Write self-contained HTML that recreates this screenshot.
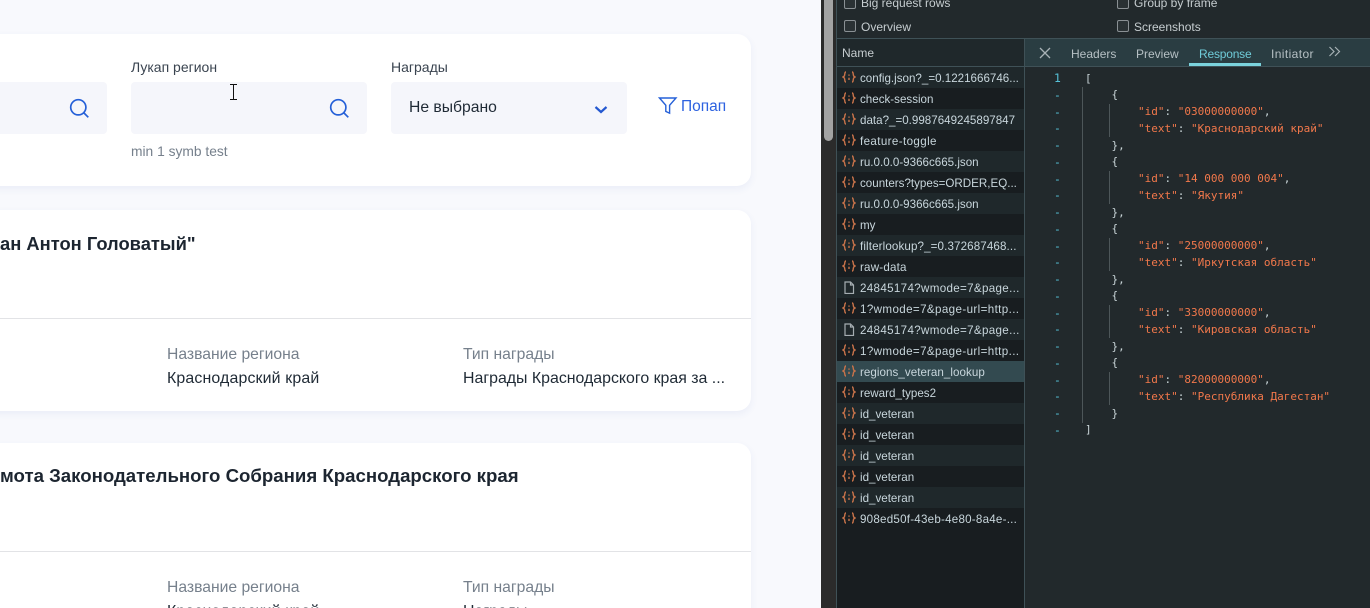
<!DOCTYPE html>
<html lang="ru"><head><meta charset="utf-8"><title>Screenshot</title>
<style>
html,body{margin:0;padding:0;width:1370px;height:608px;overflow:hidden}
body{position:relative;background:#f8f9fd;font-family:"Liberation Sans",sans-serif}
.a,.t{position:absolute;white-space:nowrap}
.card{position:absolute;left:-20px;width:771px;background:#fff;border-radius:14px;box-shadow:0 3px 8px rgba(60,90,170,.07)}
.box{position:absolute;background:#f5f6fb;border-radius:4px;height:52px;top:82px}
.lbl{font-size:14px;color:#3a4450;line-height:16px}
.mut{color:#76808c;font-size:15.7px;line-height:18px}
.val{color:#1f2a35;font-size:15.9px;line-height:18px}
h2{position:absolute;margin:0;line-height:24px;font-weight:700;color:#1c2530;white-space:nowrap}
.hr{position:absolute;left:0;width:751px;height:1px;background:#e2e3e6}
#dt{position:absolute;left:821px;top:0;width:549px;height:608px;background:#22292c;overflow:hidden}
.cb{position:absolute;width:10px;height:10px;border:1px solid #8a9094;border-radius:2px;background:#2a3134}
.dl{position:absolute;font-size:12px;line-height:14px;color:#c6cdd0;white-space:nowrap}
#list{position:absolute;left:15px;top:67px;width:189px;height:541px;box-sizing:border-box;background:#181d20;border-left:1px solid #3f5157;border-right:1px solid #3f5157}
.r{height:21px;line-height:23px;font-size:11.6px;color:#c8d6dc;position:relative;padding-left:23px;white-space:nowrap;overflow:hidden}
.r:nth-child(odd){background:#1f282b}
.r.s{background:#334a50}
.r svg{position:absolute;left:5px;top:4px}
.tab{position:absolute;top:47px;font-size:12px;line-height:14px;color:#b6c0c4}
#code{position:absolute;left:1085px;top:70.6px;font-family:"DejaVu Sans Mono",monospace;font-size:11px;line-height:16.75px;color:#c9d5d8;white-space:pre}
#code b{font-weight:400;color:#f2784b}
#gut{position:absolute;left:1054px;top:70px;width:8px;font-family:"DejaVu Sans Mono",monospace;font-size:11.35px;line-height:16.75px;color:#56c2d8;white-space:pre}
.g{position:absolute;width:1px;background:#4d5659}
</style></head><body>
<svg width="0" height="0" style="position:absolute"><defs>
<symbol id="js" viewBox="0 0 14 12"><path fill="none" stroke="#c8734a" stroke-width="1.4" d="M4 1C2.500 1 3 3 2.500 4.500 2.200 5.500 1 6 1 6s1.200.5 1.500 1.500C3 9 2.500 11 4 11M10 1c1.500 0 1 2 1.500 3.500.3 1 1.500 1.500 1.500 1.500s-1.200.5-1.500 1.500C11 9 11.500 11 10 11M7 3.500v1.300M7 6.700V9"/></symbol>
<symbol id="doc" viewBox="0 0 14 13"><path fill="none" stroke="#a5adb1" stroke-width="1.200" d="M3 1h5.500L11.500 4v8.500H3zM8.500 1v3h3"/></symbol>
</defs></svg>

<div class="card" style="top:34px;height:152px"></div>
<div class="box" style="left:-10px;width:117px"></div>
<svg class="a" style="left:69px;top:98px" width="21" height="21" viewBox="0 0 21 21" fill="none" stroke="#2560d8" stroke-width="1.700"><circle cx="9.300" cy="9.300" r="7.600"/><path d="M15 15l4.300 4.300"/></svg>
<div class="t lbl" style="left:131px;top:59px">Лукап регион</div>
<div class="box" style="left:131px;width:236px"></div>
<svg class="a" style="left:329px;top:98px" width="21" height="21" viewBox="0 0 21 21" fill="none" stroke="#2560d8" stroke-width="1.700"><circle cx="9.300" cy="9.300" r="7.600"/><path d="M15 15l4.300 4.300"/></svg>
<svg class="a" style="left:229px;top:84px" width="9" height="17" viewBox="0 0 9 17" fill="none" stroke="#111" stroke-width="1"><path d="M1 .5h7M1 15.500h7M4.500 .5v15"/></svg>
<div class="t" style="left:131px;top:144px;font-size:13.8px;line-height:16px;color:#76808c">min 1 symb test</div>
<div class="t lbl" style="left:391px;top:59px">Награды</div>
<div class="box" style="left:391px;width:236px"></div>
<div class="t" style="left:409px;top:98px;font-size:15.7px;line-height:20px;color:#1f2a35">Не выбрано</div>
<svg class="a" style="left:594px;top:105px" width="14" height="10" viewBox="0 0 14 10" fill="none" stroke="#2458d0" stroke-width="2.200"><path d="M1.500 2l5.500 5 5.500-5"/></svg>
<svg class="a" style="left:658px;top:97px" width="20" height="18" viewBox="0 0 20 18" fill="none" stroke="#2560d8" stroke-width="1.400"><path d="M1.500 1h16.500l-6.400 7.300v7.900l-3.800-1.800V8.300z"/></svg>
<div class="t" style="left:681px;top:98px;font-size:15.500px;line-height:18px;color:#2d62e0">Попап</div>

<div class="card" style="top:210px;height:201px"></div>
<h2 style="left:0;top:232px;font-size:18.35px">ан Антон Головатый"</h2>
<div class="hr" style="top:318px"></div>
<div class="t mut" style="left:167px;top:346px">Название региона</div>
<div class="t val" style="left:167px;top:370px;letter-spacing:.15px">Краснодарский край</div>
<div class="t mut" style="left:463px;top:346px">Тип награды</div>
<div class="t val" style="left:463px;top:370px">Награды Краснодарского края за ...</div>

<div class="card" style="top:443px;height:180px"></div>
<h2 style="left:0;top:464px;font-size:18.64px">мота Законодательного Собрания Краснодарского края</h2>
<div class="hr" style="top:551px"></div>
<div class="t mut" style="left:167px;top:579px">Название региона</div>
<div class="t val" style="left:167px;top:603px;letter-spacing:.15px">Краснодарский край</div>
<div class="t mut" style="left:463px;top:579px">Тип награды</div>
<div class="t val" style="left:463px;top:603px">Награды</div>

<div id="dt">
<div class="a" style="left:0;top:0;width:15px;height:608px;background:#2b2b2b"></div>
<div class="a" style="left:3px;top:0;width:9px;height:141px;background:#a3a3a3;border-radius:0 0 5px 5px"></div>
<div class="a" style="left:15px;top:0;width:1px;height:608px;background:#3f5157"></div>
<div class="cb" style="left:23px;top:-3px"></div><div class="dl" style="left:40px;top:-4px">Big request rows</div>
<div class="cb" style="left:23px;top:20px"></div><div class="dl" style="left:40px;top:20px">Overview</div>
<div class="cb" style="left:296px;top:-3px"></div><div class="dl" style="left:313px;top:-4px">Group by frame</div>
<div class="cb" style="left:296px;top:20px"></div><div class="dl" style="left:313px;top:20px">Screenshots</div>
<div class="a" style="left:16px;top:38px;width:533px;height:1px;background:#3f5157"></div>
<div class="a" style="left:16px;top:39px;width:187px;height:27px;background:#1f282b"></div>
<div class="a" style="left:204px;top:39px;width:345px;height:27px;background:#2a3d42"></div>
<div class="a" style="left:16px;top:66px;width:533px;height:1px;background:#3f5157"></div>
<div class="a" style="left:203px;top:39px;width:1px;height:28px;background:#3f5157"></div>
<div class="dl" style="left:21px;top:46px;font-size:12px;color:#c6cdd0">Name</div>
<svg class="a" style="left:218px;top:47px" width="12" height="12" viewBox="0 0 12 12" stroke="#a8b2b6" stroke-width="1.300"><path d="M1 1l10 10M11 1L1 11"/></svg>
<div class="tab" style="left:250px">Headers</div>
<div class="tab" style="left:315px">Preview</div>
<div class="tab" style="left:378px;color:#6fcbd8;letter-spacing:-.2px">Response</div>
<div class="a" style="left:368px;top:63px;width:72px;height:3px;background:#7bd3dd"></div>
<div class="tab" style="left:450px;letter-spacing:.4px">Initiator</div>
<svg class="a" style="left:507px;top:46px" width="13" height="12" viewBox="0 0 13 12" fill="none" stroke="#a8b2b6" stroke-width="1.200"><path d="M1.500 1l4.500 4.500-4.500 4.500M7 1l4.500 4.500L7 10"/></svg>
<div id="list">
<div class="r"><svg width="14" height="12"><use href="#js"/></svg>config.json?_=0.1221666746...</div>
<div class="r"><svg width="14" height="12"><use href="#js"/></svg>check-session</div>
<div class="r"><svg width="14" height="12"><use href="#js"/></svg>data?_=0.9987649245897847</div>
<div class="r" style="letter-spacing:.38px"><svg width="14" height="12"><use href="#js"/></svg>feature-toggle</div>
<div class="r"><svg width="14" height="12"><use href="#js"/></svg>ru.0.0.0-9366c665.json</div>
<div class="r"><svg width="14" height="12"><use href="#js"/></svg>counters?types=ORDER,EQ...</div>
<div class="r"><svg width="14" height="12"><use href="#js"/></svg>ru.0.0.0-9366c665.json</div>
<div class="r"><svg width="14" height="12"><use href="#js"/></svg>my</div>
<div class="r" style="letter-spacing:.12px"><svg width="14" height="12"><use href="#js"/></svg>filterlookup?_=0.372687468...</div>
<div class="r" style="letter-spacing:.2px"><svg width="14" height="12"><use href="#js"/></svg>raw-data</div>
<div class="r" style="letter-spacing:.33px"><svg width="14" height="13"><use href="#doc"/></svg>24845174?wmode=7&amp;page...</div>
<div class="r" style="letter-spacing:.38px"><svg width="14" height="12"><use href="#js"/></svg>1?wmode=7&amp;page-url=http...</div>
<div class="r" style="letter-spacing:.33px"><svg width="14" height="13"><use href="#doc"/></svg>24845174?wmode=7&amp;page...</div>
<div class="r" style="letter-spacing:.38px"><svg width="14" height="12"><use href="#js"/></svg>1?wmode=7&amp;page-url=http...</div>
<div class="r s" style="letter-spacing:.05px"><svg width="14" height="12"><use href="#js"/></svg>regions_veteran_lookup</div>
<div class="r"><svg width="14" height="12"><use href="#js"/></svg>reward_types2</div>
<div class="r"><svg width="14" height="12"><use href="#js"/></svg>id_veteran</div>
<div class="r"><svg width="14" height="12"><use href="#js"/></svg>id_veteran</div>
<div class="r"><svg width="14" height="12"><use href="#js"/></svg>id_veteran</div>
<div class="r"><svg width="14" height="12"><use href="#js"/></svg>id_veteran</div>
<div class="r"><svg width="14" height="12"><use href="#js"/></svg>id_veteran</div>
<div class="r" style="background:#181d20;letter-spacing:.23px"><svg width="14" height="12"><use href="#js"/></svg>908ed50f-43eb-4e80-8a4e-...</div>
</div>
</div>

<div class="g" style="left:1082px;top:87px;height:336px"></div>
<div class="g" style="left:1109px;top:104px;height:33px"></div>
<div class="g" style="left:1109px;top:171px;height:33px"></div>
<div class="g" style="left:1109px;top:238px;height:33px"></div>
<div class="g" style="left:1109px;top:305px;height:33px"></div>
<div class="g" style="left:1109px;top:372px;height:33px"></div>
<div id="gut">1
-
-
-
-
-
-
-
-
-
-
-
-
-
-
-
-
-
-
-
-
-</div>
<div id="code">[
    {
        <b>"id"</b>: <b>"03000000000"</b>,
        <b>"text"</b>: <b>"Краснодарский край"</b>
    },
    {
        <b>"id"</b>: <b>"14 000 000 004"</b>,
        <b>"text"</b>: <b>"Якутия"</b>
    },
    {
        <b>"id"</b>: <b>"25000000000"</b>,
        <b>"text"</b>: <b>"Иркутская область"</b>
    },
    {
        <b>"id"</b>: <b>"33000000000"</b>,
        <b>"text"</b>: <b>"Кировская область"</b>
    },
    {
        <b>"id"</b>: <b>"82000000000"</b>,
        <b>"text"</b>: <b>"Республика Дагестан"</b>
    }
]</div>
</body></html>
